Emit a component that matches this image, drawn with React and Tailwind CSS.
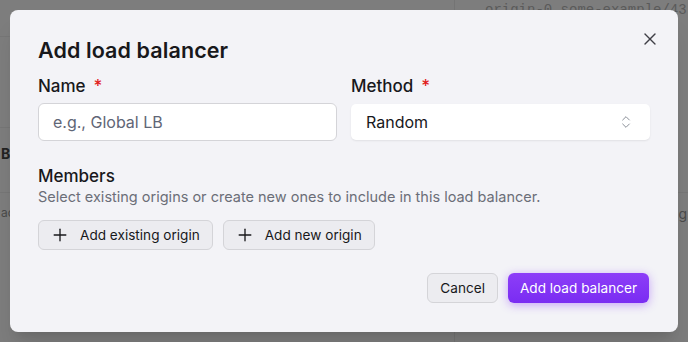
import React, { useState } from 'react';
import { X, Plus, ChevronsUpDown } from 'lucide-react';

export default function App() {
  const [name, setName] = useState('');
  const [method, setMethod] = useState('Random');

  return (
    <div className="relative h-[342px] w-[688px] overflow-hidden bg-[#7d7d7d] font-['Inter',sans-serif]">
      {/* page behind the overlay */}
      <div className="flex h-full">
        <div className="w-[455px] border-r border-[#747474]">
          <div className="h-[37px] border-b border-[#767676]" />
          <div className="h-[91px] border-b border-[#767676]" />
          <div className="flex h-[50px] items-center pl-[1px] text-[14px] font-bold text-[#222]">
            <span>B</span>
          </div>
          <div className="h-[15px] border-b border-[#767676]" />
          <div className="flex h-[40px] items-center pl-[1px] text-[12px] text-[#4a4a4a]">
            <span>ac</span>
          </div>
        </div>
        <div className="min-w-0 flex-1">
          <div className="h-[37px] whitespace-nowrap pl-[30px] font-['Liberation_Mono',monospace] text-[14px] leading-[20px] text-[#5a5a5a]">origin-0.some-example/43</div>
          <div className="h-[156px] border-b border-[#767676]" />
          <div className="flex h-[40px] items-center justify-end pr-[1px] text-[14px] text-[#4a4a4a]">.g</div>
        </div>
      </div>

      {/* dialog */}
      <div className="absolute inset-0 p-[10px]">
        <div className="h-[322px] w-[668px] rounded-[8px] bg-[#f3f3f7] px-[28px] pt-[26px] shadow-xl">
          <div className="flex items-start justify-between">
            <h2 className="text-[21.5px] font-semibold leading-[28px] tracking-[0.1px] text-[#18181b]">Add load balancer</h2>
            <button className="-mr-[10px] -mt-[7px] text-[#3f3f46]">
              <X className="h-[20px] w-[20px]" strokeWidth={1.6} />
            </button>
          </div>

          <div className="mt-[10px] grid grid-cols-2 gap-[14px]">
            <div>
              <label className="flex items-center gap-[8px] text-[17px] font-medium leading-[24px] text-[#18181b]">
                Name <span className="text-[#e11d1d]">*</span>
              </label>
              <input
                value={name}
                onChange={(e) => setName(e.target.value)}
                placeholder="e.g., Global LB"
                className="mt-[5px] h-[38px] w-full rounded-[6px] border border-[#d4d4d8] bg-white px-[14px] text-[16px] text-[#18181b] placeholder-[#5f6676] outline-none"
              />
            </div>
            <div>
              <label className="flex items-center gap-[8px] text-[17px] font-medium leading-[24px] text-[#18181b]">
                Method <span className="text-[#e11d1d]">*</span>
              </label>
              <button
                onClick={() => setMethod(method)}
                className="mt-[6px] flex h-[36px] w-full items-center justify-between rounded-[5px] bg-white pl-[15px] pr-[16px] text-[16px] text-[#18181b] shadow-[0_1px_2px_rgba(0,0,0,0.08)]"
              >
                <span>{method}</span>
                <ChevronsUpDown className="h-[16px] w-[16px] text-[#8a8f98]" strokeWidth={1.5} />
              </button>
            </div>
          </div>

          <div className="mt-[24px]">
            <h3 className="text-[17px] font-medium leading-[22px] text-[#18181b]">Members</h3>
            <p className="text-[14.5px] leading-[20px] text-[#6b6e78]">
              Select existing origins or create new ones to include in this load balancer.
            </p>
            <div className="mt-[13px] flex gap-[10px]">
              <button className="flex h-[30px] items-center gap-[10px] rounded-[6px] border border-[#d4d4d8] bg-[#ececf0] pl-[11px] pr-[12px] text-[13.6px] text-[#18181b]">
                <Plus className="h-[20px] w-[20px]" strokeWidth={1.6} />
                Add existing origin
              </button>
              <button className="flex h-[30px] items-center gap-[10px] rounded-[6px] border border-[#d4d4d8] bg-[#ececf0] pl-[11px] pr-[12px] text-[13.6px] text-[#18181b]">
                <Plus className="h-[20px] w-[20px]" strokeWidth={1.6} />
                Add new origin
              </button>
            </div>
          </div>

          <div className="mt-[23px] flex justify-end gap-[10px] pr-[1px]">
            <button className="h-[30px] rounded-[6px] border border-[#d4d4d8] bg-[#ececf0] px-[12px] text-[13.6px] text-[#18181b]">
              Cancel
            </button>
            <button className="h-[30px] rounded-[6px] bg-gradient-to-b from-[#8d3df8] to-[#7a2cf2] px-[12px] text-[13.6px] text-white shadow-[0_2px_10px_rgba(139,61,248,0.45)]">
              Add load balancer
            </button>
          </div>
        </div>
      </div>
    </div>
  );
}
